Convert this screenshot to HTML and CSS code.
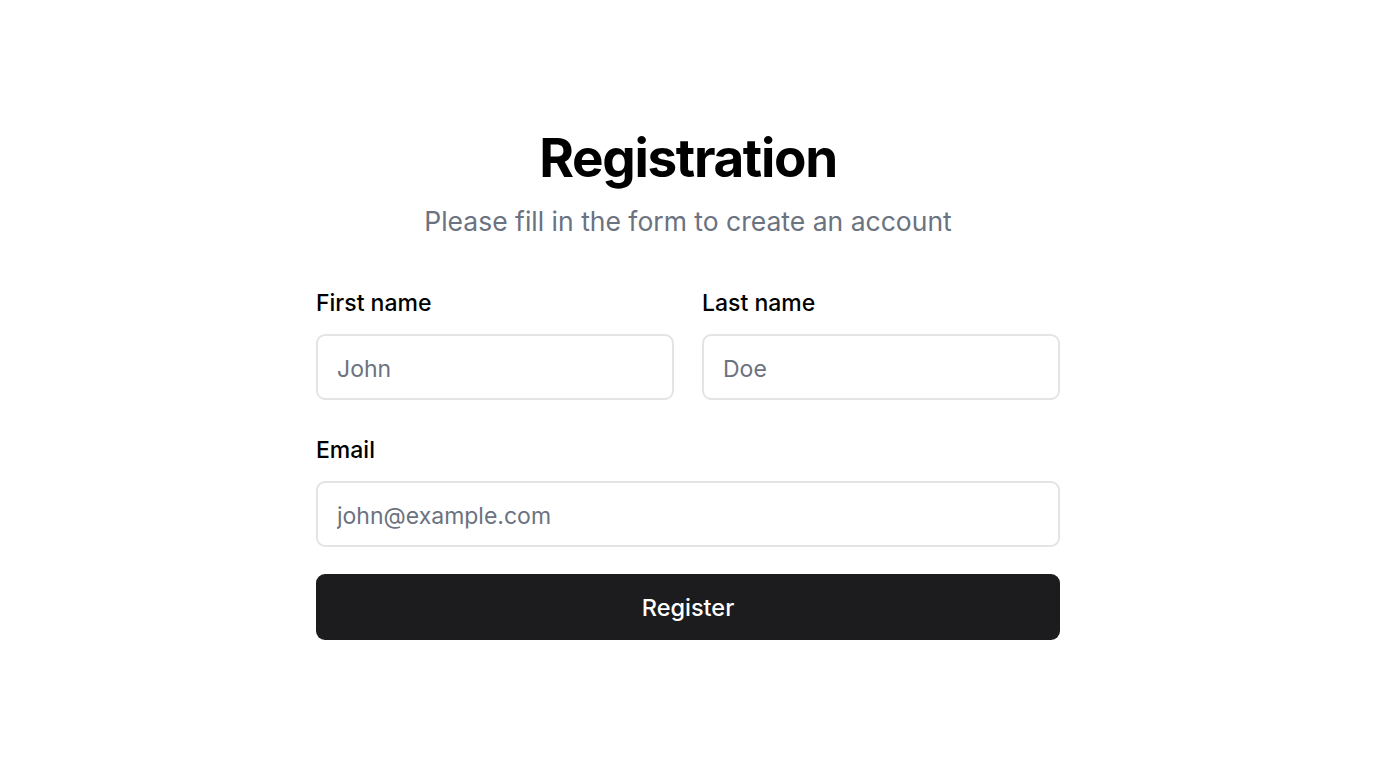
FILE: index.html
```html
<!DOCTYPE html>
<html lang="en">
<head>
<meta charset="utf-8">
<title>Registration</title>
<link rel="stylesheet" href="styles.css">
</head>
<body>
<main class="page">
  <form class="card">
    <header class="head">
      <h1 class="title">Registration</h1>
      <p class="subtitle">Please fill in the form to create an account</p>
    </header>
    <div class="row">
      <div class="field">
        <label class="label" for="first">First name</label>
        <input class="input" id="first" type="text" placeholder="John">
      </div>
      <div class="field">
        <label class="label" for="last">Last name</label>
        <input class="input" id="last" type="text" placeholder="Doe">
      </div>
    </div>
    <div class="field field-email">
      <label class="label" for="email">Email</label>
      <input class="input" id="email" type="email" placeholder="john@example.com">
    </div>
    <button class="btn" type="button">Register</button>
  </form>
</main>
</body>
</html>
```
FILE: styles.css
```css
* { box-sizing: border-box; }
html, body { margin: 0; padding: 0; background: #ffffff; }
body {
  font-family: Inter, "Noto Sans", sans-serif;
  color: #000;
}
.page {
  display: flex;
  justify-content: center;
  padding-top: 126px;
}
.card {
  width: 744px;
  display: flex;
  flex-direction: column;
}
.head {
  text-align: center;
  margin-bottom: 49px;
}
.title {
  margin: 0;
  font-size: 53px;
  line-height: 64px;
  font-weight: 700;
  letter-spacing: -0.025em;
}
.subtitle {
  margin: 13px 0 0;
  font-size: 26.5px;
  line-height: 36px;
  color: #6b7280;
}
.row {
  display: grid;
  grid-template-columns: minmax(0, 1fr) minmax(0, 1fr);
  gap: 28px;
  margin-bottom: 35px;
}
.field {
  display: flex;
  flex-direction: column;
  min-width: 0;
}
.field-email {
  margin-bottom: 27px;
}
.label {
  font-size: 23px;
  line-height: 30px;
  font-weight: 500;
  margin-bottom: 16px;
}
.input {
  width: 100%;
  min-width: 0;
  height: 66px;
  border: 2px solid #e4e4e7;
  border-radius: 9px;
  padding: 4px 19px 0;
  font-family: inherit;
  font-size: 23px;
  color: #000;
  background: #fff;
  outline: none;
}
.input::placeholder { color: #6b7280; }
.btn {
  height: 66px;
  border: none;
  border-radius: 9px;
  background: #1c1c1e;
  color: #fff;
  font-family: inherit;
  font-size: 23.5px;
  font-weight: 500;
}
```
